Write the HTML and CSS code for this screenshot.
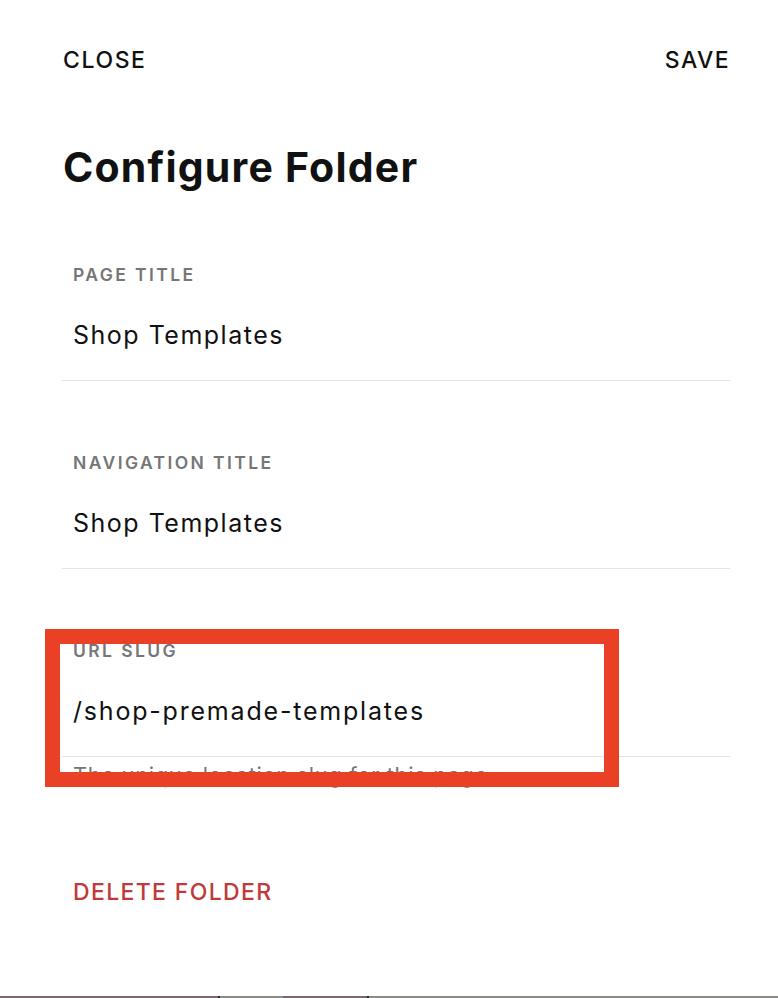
FILE: index.html
```html
<!DOCTYPE html>
<html lang="en">
<head>
<meta charset="utf-8">
<title>Configure Folder</title>
<link rel="stylesheet" href="styles.css">
</head>
<body>
<div class="page">
  <div class="panel">
    <header class="topbar">
      <span class="action">CLOSE</span>
      <span class="action">SAVE</span>
    </header>
    <h1 class="title">Configure Folder</h1>
    <div class="field">
      <div class="label">PAGE TITLE</div>
      <div class="value">Shop Templates</div>
    </div>
    <div class="field">
      <div class="label">NAVIGATION TITLE</div>
      <div class="value">Shop Templates</div>
    </div>
    <div class="slug-wrap">
      <div class="field">
        <div class="label">URL SLUG</div>
        <div class="value slug">/shop-premade-templates</div>
      </div>
      <div class="help">The unique location slug for this page.</div>
      <div class="highlight"></div>
    </div>
    <div class="delete">DELETE FOLDER</div>
  </div>
  <div class="strip"></div>
</div>
</body>
</html>
```

FILE: styles.css
```css
* { box-sizing: border-box; }
html, body { margin: 0; padding: 0; background: #fff; }
body {
  font-family: Inter, "Liberation Sans", Arial, sans-serif;
  color: #111;
}
.page {
  min-height: 998px;
  display: flex;
  flex-direction: column;
}
.panel {
  flex: 1;
  padding: 46px 48px 0 62px;
  display: flex;
  flex-direction: column;
}
.topbar {
  display: flex;
  justify-content: space-between;
  padding: 0 1px;
}
.action {
  font-size: 23px;
  line-height: 28px;
  font-weight: 500;
  letter-spacing: 1.6px;
  color: #111;
}
.action:last-child { letter-spacing: 1.4px; margin-right: -1px; }
.title {
  margin: 68px 0 0 1px;
  font-size: 41px;
  line-height: 50px;
  font-weight: 700;
  letter-spacing: 1.2px;
  color: #111;
}
.field {
  margin-top: 72px;
  padding: 0 0 30px 11px;
  border-bottom: 1px solid #e5e5e5;
}
.field + .field { margin-top: 71.5px; }
.slug-wrap { position: relative; margin-top: 71.5px; }
.slug-wrap .field { margin-top: 0; }
.label {
  font-size: 17.5px;
  line-height: 22px;
  font-weight: 600;
  letter-spacing: 2.4px;
  color: #767676;
}
.value {
  margin-top: 33.5px;
  font-size: 25px;
  line-height: 30px;
  font-weight: 400;
  letter-spacing: 1.5px;
  color: #111;
}
.value.slug { letter-spacing: 1.8px; }
.help {
  margin-top: 5px;
  padding-left: 11px;
  font-size: 22px;
  line-height: 26px;
  letter-spacing: 0.6px;
  color: #767676;
}
.highlight {
  position: absolute;
  left: -17px;
  top: -11.5px;
  width: 574px;
  height: 158px;
  border: 15px solid #e94026;
}
.delete {
  margin-top: 90px;
  padding-left: 11px;
  font-size: 23px;
  line-height: 28px;
  font-weight: 500;
  letter-spacing: 1.35px;
  color: #c13a3a;
}
.strip {
  height: 2px;
  background: linear-gradient(to right, #7c6672 0 218px, #2a2a2a 218px 220px, #8a8a88 220px 283px, #7c6672 283px 367px, #2a2a2a 367px 369px, #8a8a88 369px);
}
```
